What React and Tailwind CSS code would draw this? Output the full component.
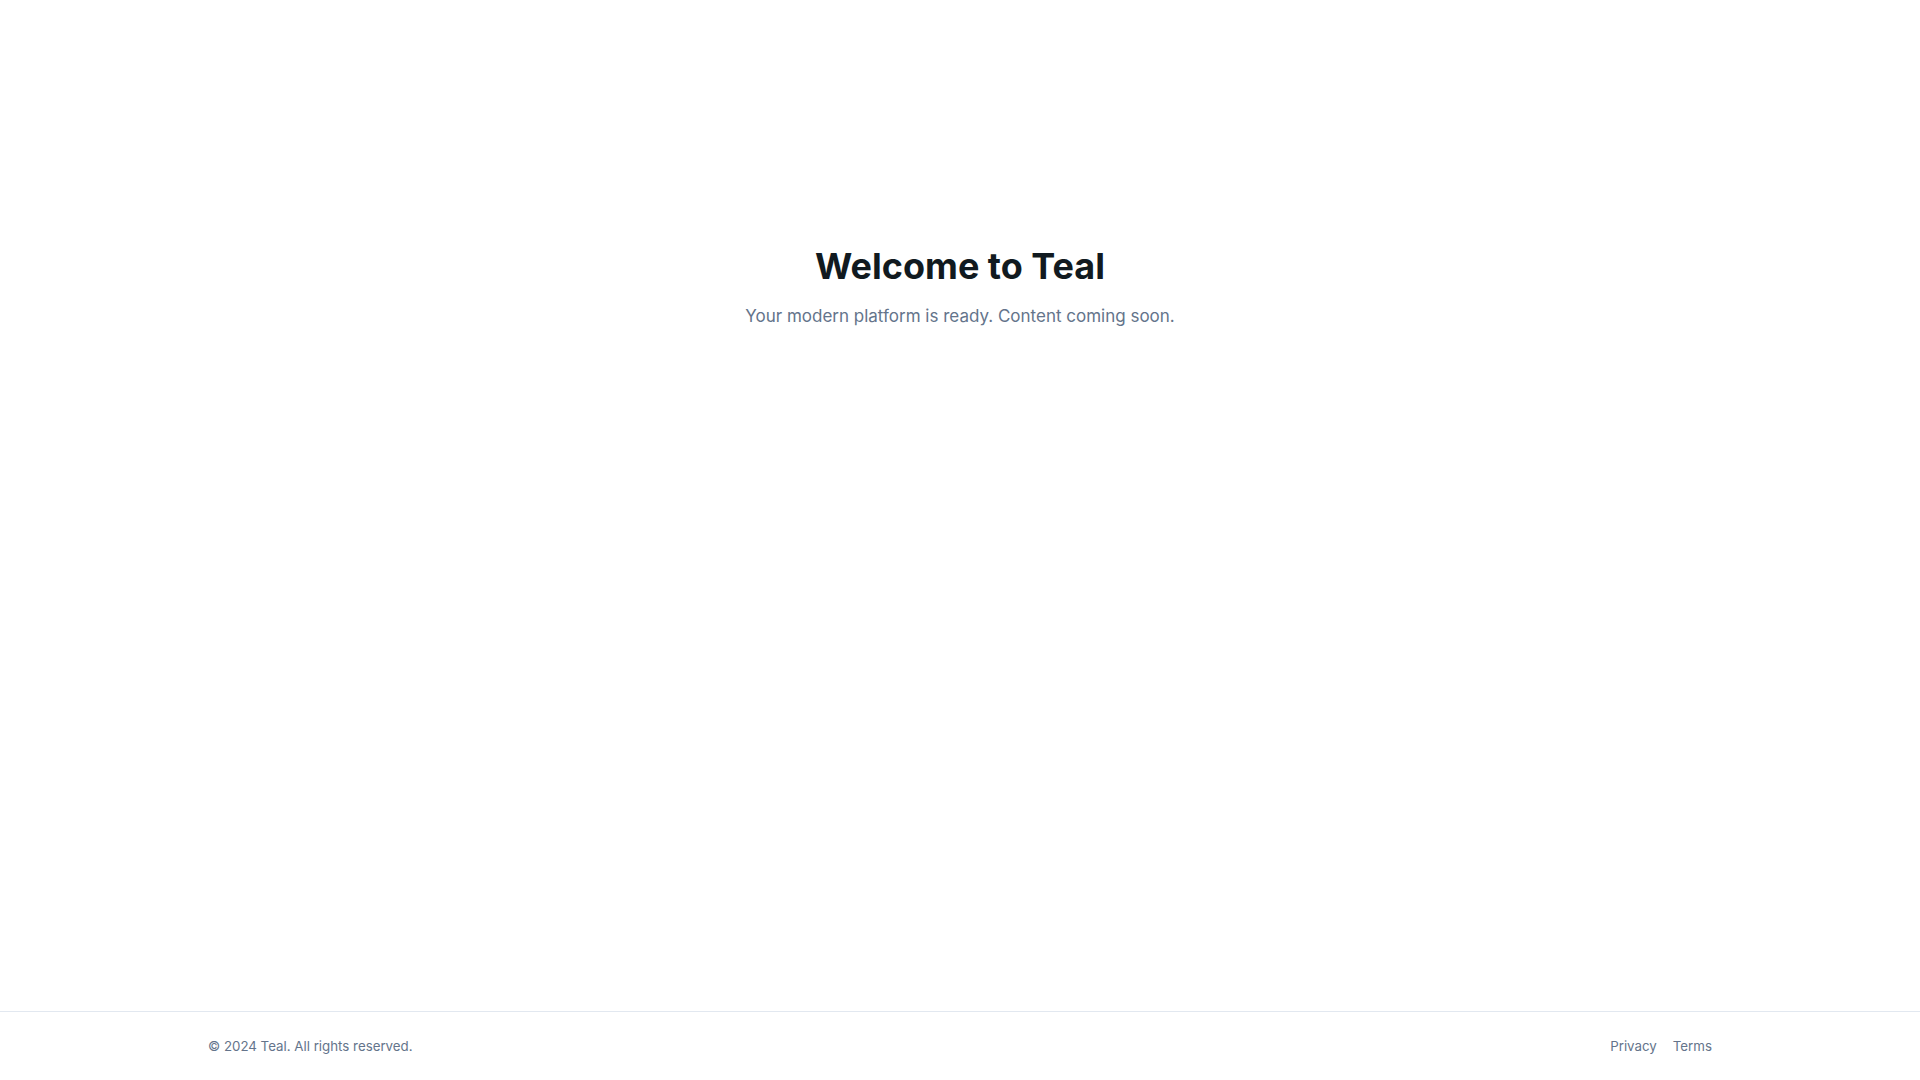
export default function App() {
  return (
    <div
      className="min-h-screen flex flex-col bg-white"
      style={{ fontFamily: "Inter, 'Noto Sans', sans-serif" }}
    >
      <main className="flex-1 pt-[246px]">
        <div className="text-center">
          <h1 className="text-4xl font-bold text-[#111a20]">Welcome to Teal</h1>
          <p className="mt-4 text-[17px] leading-7 text-[#64748b]">
            Your modern platform is ready. Content coming soon.
          </p>
        </div>
      </main>
      <footer className="border-t border-[#e2e8f0]">
        <div className="max-w-[1536px] mx-auto px-4 py-6 flex items-center justify-between text-[13.3px] leading-5 text-[#64748b]">
          <p>© 2024 Teal. All rights reserved.</p>
          <div className="flex items-center gap-4">
            <a href="#" className="hover:text-[#0f172a]">Privacy</a>
            <a href="#" className="hover:text-[#0f172a]">Terms</a>
          </div>
        </div>
      </footer>
    </div>
  );
}
